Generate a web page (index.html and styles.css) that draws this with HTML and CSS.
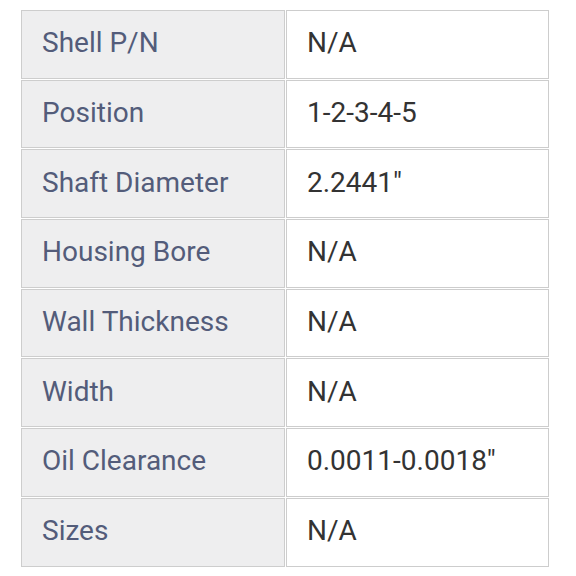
FILE: index.html
```html
<!DOCTYPE html>
<html>
<head>
<meta charset="utf-8">
<link rel="stylesheet" href="styles.css">
</head>
<body>
<table class="specs">
  <tr><td class="label">Shell P/N</td><td class="value">N/A</td></tr>
  <tr><td class="label">Position</td><td class="value">1-2-3-4-5</td></tr>
  <tr><td class="label">Shaft Diameter</td><td class="value">2.2441"</td></tr>
  <tr><td class="label">Housing Bore</td><td class="value">N/A</td></tr>
  <tr><td class="label">Wall Thickness</td><td class="value">N/A</td></tr>
  <tr><td class="label">Width</td><td class="value">N/A</td></tr>
  <tr><td class="label">Oil Clearance</td><td class="value">0.0011-0.0018"</td></tr>
  <tr><td class="label">Sizes</td><td class="value">N/A</td></tr>
</table>
</body>
</html>
```
FILE: styles.css
```css
html, body {
  margin: 0;
  padding: 0;
  background: #ffffff;
}
body {
  padding: 9px 0 0 20px;
  font-family: Roboto, "Liberation Sans", sans-serif;
}
.specs {
  border-collapse: separate;
  border-spacing: 1px;
  width: 530px;
  table-layout: fixed;
}
.specs td {
  height: 63.7px;
  padding: 0 0 3px 20px;
  border: 1px solid #cdcdcd;
  font-size: 28px;
  vertical-align: middle;
  white-space: nowrap;
}
.specs .label {
  width: 242px;
  background: #eeeeef;
  color: #535c7a;
}
.specs .value {
  background: #ffffff;
  color: #333333;
}
```
